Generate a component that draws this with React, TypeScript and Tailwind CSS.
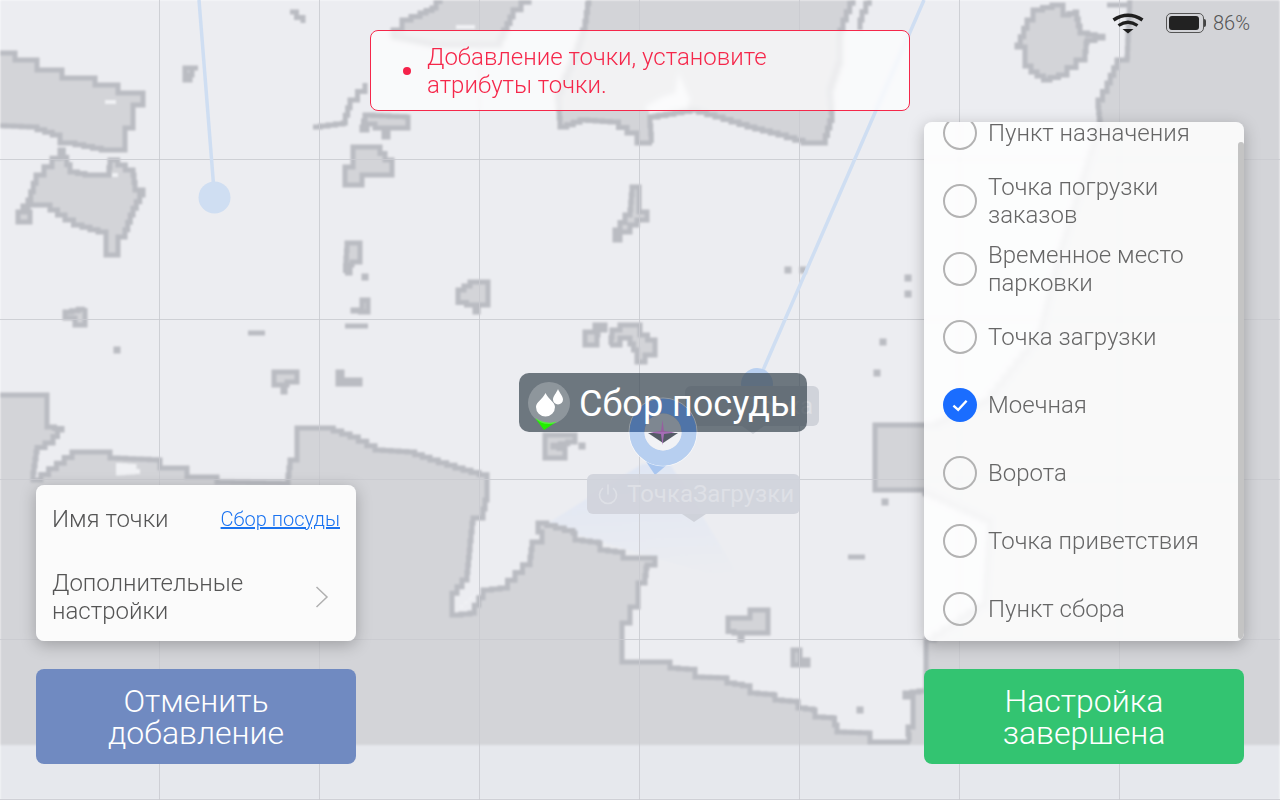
const LAND_FILL = "#d3d4d8";
const LAND_LINE = "#babcc2";
const WATER = "#ecedf1";

type Pt = [number, number];

// raster map look: every slanted edge turns into small stair steps
function stairs(points: Pt[], closed = true, step = 8): string {
  const out: Pt[] = [points[0]];
  const count = closed ? points.length : points.length - 1;
  for (let i = 0; i < count; i++) {
    const [x0, y0] = points[i];
    const [x1, y1] = points[(i + 1) % points.length];
    const n = Math.max(1, Math.round(Math.max(Math.abs(x1 - x0), Math.abs(y1 - y0)) / step));
    for (let k = 1; k <= n; k++) {
      const nx = x0 + ((x1 - x0) * k) / n;
      const ny = y0 + ((y1 - y0) * k) / n;
      out.push([nx, y0 + ((y1 - y0) * (k - 1)) / n]);
      out.push([nx, ny]);
    }
  }
  return "M" + out.map((p) => `${p[0].toFixed(1)} ${p[1].toFixed(1)}`).join("L") + (closed ? "Z" : "");
}

const mainland: Pt[] = [
  [-10, 395], [43, 395], [47, 400], [47, 427], [62, 430], [53, 443], [37, 452], [33, 480], [72, 452], [107, 452], [110, 458],
  [157, 460], [160, 468], [182, 468], [187, 477], [213, 477], [217, 482], [287, 483], [290, 460], [297, 460], [297, 428],
  [325, 428], [350, 437], [375, 450], [407, 452], [430, 460], [455, 468], [487, 477], [487, 500], [483, 518], [473, 523],
  [470, 550], [467, 580], [452, 600], [452, 615], [470, 613], [483, 590], [500, 588], [530, 557], [532, 542], [542, 532],
  [538, 523], [573, 533], [575, 540], [598, 543], [600, 550], [623, 553], [623, 558], [647, 558], [655, 565], [647, 568],
  [645, 583], [638, 585], [638, 607], [630, 608], [630, 623], [622, 623], [622, 662], [668, 662], [670, 668], [695, 670],
  [695, 677], [725, 678], [727, 683], [750, 687], [750, 693], [773, 695], [775, 700], [797, 702], [798, 708], [813, 710],
  [815, 717], [832, 718], [837, 732], [867, 733], [870, 742], [910, 742], [908, 727], [913, 723], [913, 697], [905, 693],
  [926, 690], [926, 640], [985, 600], [990, 520], [925, 490], [875, 490], [875, 425], [930, 425], [985, 400], [1040, 330],
  [1060, 250], [1100, 120], [1098, 100], [1107, 83], [1117, 60], [1127, 57], [1130, -10], [1290, -10], [1290, 760], [-10, 760],
];

const islands: Pt[][] = [
  [[-10, 53], [15, 53], [15, 60], [37, 60], [37, 70], [62, 70], [62, 78], [95, 78], [95, 85], [118, 85], [118, 93], [143, 93], [143, 105], [133, 105], [133, 128], [125, 128], [125, 150], [110, 150], [75, 143], [62, 143], [60, 135], [37, 127], [-10, 125]],
  [[60, 150], [70, 172], [85, 175], [108, 175], [110, 160], [133, 175], [135, 190], [143, 195], [133, 215], [125, 237], [118, 240], [118, 255], [106, 255], [106, 232], [82, 225], [65, 215], [50, 205], [35, 205], [28, 212], [30, 222], [18, 222], [18, 212], [28, 200], [36, 175]],
  [[393, 30], [402, 20], [420, 13], [432, 8], [440, -5], [537, -5], [513, 17], [507, 30], [500, 45], [440, 45], [395, 36]],
  [[590, -5], [585, 30], [575, 60], [558, 100], [560, 127], [580, 120], [610, 122], [627, 133], [637, 143], [652, 143], [650, 117], [690, 110], [715, 117], [747, 127], [778, 135], [803, 143], [823, 143], [832, 113], [830, 87], [840, 57], [840, 30], [843, 20], [853, -5]],
  [[185, 68], [198, 68], [192, 75], [190, 80], [185, 80]],
  [[353, 147], [375, 147], [385, 160], [392, 165], [392, 175], [368, 175], [362, 185], [345, 185], [345, 167], [353, 160]],
  [[362, 127], [365, 115], [405, 117], [408, 128], [390, 128], [388, 137], [384, 128], [375, 124], [367, 130]],
  [[347, 243], [360, 243], [360, 262], [352, 265], [350, 273], [345, 273]],
  [[353, 310], [362, 300], [368, 300], [368, 312]],
  [[274, 372], [297, 372], [297, 382], [287, 385], [285, 392], [283, 385], [274, 380]],
  [[338, 372], [342, 372], [342, 380], [360, 380], [360, 384], [338, 384]],
  [[458, 290], [470, 282], [488, 282], [488, 305], [478, 312], [475, 305], [458, 300]],
  [[585, 345], [585, 332], [595, 325], [605, 325], [605, 330], [598, 335], [597, 345]],
  [[610, 345], [612, 330], [620, 325], [635, 325], [640, 335], [655, 345], [655, 355], [645, 362], [637, 362], [637, 350], [630, 338], [620, 345]],
  [[632, 187], [639, 187], [639, 212], [647, 220], [637, 225], [630, 232], [620, 232], [620, 240], [615, 240], [615, 230], [625, 215], [630, 210]],
  [[545, 435], [575, 435], [575, 442], [553, 447], [565, 450], [565, 458], [545, 458]],
  [[728, 618], [745, 618], [750, 610], [762, 610], [768, 618], [768, 633], [745, 633], [742, 640], [740, 633], [728, 630]],
  [[793, 650], [797, 650], [800, 660], [808, 662], [808, 665], [793, 665]],
  [[65, 312], [85, 308], [85, 325], [78, 325], [75, 318], [65, 318]],
  [[1027, 20], [1033, 10], [1052, 5], [1063, 15], [1075, 12], [1080, 33], [1103, 38], [1087, 43], [1085, 60], [1067, 75], [1050, 80], [1037, 72], [1025, 60], [1025, 47], [1017, 45]],
];

const lakes: Pt[][] = [
  [[116, 463], [133, 464], [140, 474], [116, 476]],
  [[652, 114], [646, 105], [660, 97], [675, 92], [678, 74], [690, 102], [688, 108]],
  [[456, 25], [475, 25], [475, 29], [456, 29]],
  [[460, 605], [474, 593], [476, 596], [463, 608]],
  [[105, 100], [116, 100], [116, 104], [105, 104]],
  [[112, 173], [118, 173], [118, 177], [112, 177]],
];

const dashes: Pt[][] = [
  [[290, 12], [303, 23]],
  [[313, 127], [343, 123], [350, 100], [365, 83]],
  [[345, 326], [368, 326]],
  [[248, 333], [265, 333]],
  [[848, 557], [865, 557]],
  [[873, -5], [862, 20], [860, 30]],
  [[1107, 5], [1130, 5]],
];

const dots: Pt[] = [
  [365, 277], [117, 350], [788, 270], [803, 270], [908, 278], [908, 294], [883, 342], [877, 373], [582, 446], [860, 710], [885, 502],
];

function MapBackground() {
  const gridX = [159, 319, 479, 639, 799, 959, 1119];
  const gridY = [159, 319, 479, 639, 799];

  return (
    <>
      <svg viewBox="0 0 1280 800" className="absolute inset-0 h-[800px] w-[1280px] blur-[1px]">
        <defs>
          <linearGradient id="fan" x1="0" y1="0" x2="0.1" y2="1">
            <stop offset="0" stopColor="#dfe6f4" />
            <stop offset="1" stopColor="#ecedf1" />
          </linearGradient>
        </defs>
        <rect x="-10" y="-10" width="1300" height="820" fill={WATER} />
        <polygon points="642,464 670,464 745,585 545,525" fill="url(#fan)" />
        <path d={stairs(mainland)} fill={LAND_FILL} stroke={LAND_LINE} strokeWidth="5" />
        {islands.map((pts, i) => (
          <path key={i} d={stairs(pts)} fill={LAND_FILL} stroke={LAND_LINE} strokeWidth="5" />
        ))}
        {lakes.map((pts, i) => (
          <path key={i} d={stairs(pts, true, 5)} fill="#f0f1f4" />
        ))}
        {dashes.map((pts, i) => (
          <path key={i} d={stairs(pts, false)} fill="none" stroke={LAND_LINE} strokeWidth="5" />
        ))}
        {dots.map(([x, y], i) => (
          <rect key={i} x={x - 3.5} y={y - 3.5} width="7" height="7" fill={LAND_LINE} />
        ))}
        <rect x="-10" y="745" width="1300" height="65" fill="#e6e8ed" />
      </svg>
      <svg viewBox="0 0 1280 800" className="absolute inset-0 h-[800px] w-[1280px]">
        {gridX.map((x) => (
          <rect key={x} x={x} y="0" width="1" height="800" fill="#c9cad0" opacity="0.85" />
        ))}
        {gridY.map((y) => (
          <rect key={y} x="0" y={y} width="1280" height="1" fill="#c9cad0" opacity="0.85" />
        ))}
        <path d="M199 0L214.5 197" stroke="#cfdef2" strokeWidth="3.5" />
        <circle cx="214.5" cy="197.5" r="16" fill="#cfdef2" />
        <path d="M924 0L757 384" stroke="#cfdef2" strokeWidth="3.5" />
        <circle cx="757" cy="384" r="16" fill="#b9d0f0" />
      </svg>
    </>
  );
}

function PinMarker() {
  return (
    <svg viewBox="620 390 90 90" className="absolute left-[620px] top-[390px] h-[90px] w-[90px]">
      <path d="M645 460L668 464L655 475Z" fill="#a9c6ef" />
      <circle cx="663" cy="432" r="34" fill="none" stroke="#ffffff" strokeOpacity="0.6" strokeWidth="1" />
      <circle cx="663" cy="432" r="26" fill="none" stroke="#b7cff0" strokeWidth="15" />
      <circle cx="663" cy="432" r="18.5" fill="#f1f2f5" />
      <path d="M648 433L663 443L678 433Z" fill="#555b66" />
      <path d="M662.5 420L664 431L675 432.5L664 434L662.5 445L661 434L650 432.5L661 431Z" fill="#a66db5" />
    </svg>
  );
}

function Drops() {
  return (
    <svg viewBox="519 373 288 59" className="absolute inset-0 h-[59px] w-[288px]">
      <circle cx="663" cy="432" r="26" fill="none" stroke="#4f74a8" strokeWidth="15" />
      <circle cx="663" cy="432" r="34" fill="none" stroke="#ffffff" strokeOpacity="0.25" strokeWidth="1" />
      <circle cx="663" cy="432" r="18.5" fill="#7e8791" />
      <path d="M662.5 420L664 431L675 432.5L650 432.5L661 431Z" fill="#96609f" />
      <path d="M535 418Q546 425 557 421.5L544 430Z" fill="#22ee00" />
      <circle cx="549" cy="403" r="21" fill="#ffffff" fillOpacity="0.23" />
      <path d="M545.5 393C548 399 555 402 555 407A9.5 9.5 0 0 1 536 407C536 402 543 399 545.5 393Z" fill="#ffffff" />
      <path d="M558 389C559.5 393 563 396 563 399.5A5 5 0 0 1 553 399.5C553 396 556.5 393 558 389Z" fill="#ffffff" />
    </svg>
  );
}

function MapLabels() {
  return (
    <>
      <div className="absolute left-[685px] top-[386px] flex h-10 w-[134px] items-center justify-end rounded-md bg-[#d0d3da] px-1.5 text-2xl text-[#dfe1e6]">
        Точка
        <span className="absolute left-[57px] top-full h-0 w-0 border-x-[11px] border-t-[8px] border-x-transparent border-t-[#d0d3da]" />
      </div>
      <PinMarker />
      <div className="absolute left-[587px] top-[474px] flex h-10 w-[213px] items-center gap-[7px] rounded-md bg-[#cfd2da]/90 pl-[9px] text-2xl text-[#dee0e6]">
        <svg viewBox="0 0 24 24" className="h-6 w-6" fill="none" stroke="#dee0e6" strokeWidth="1.6" strokeLinecap="round">
          <path d="M12 3v9" />
          <path d="M17.5 6.5a8.5 8.5 0 1 1-11 0" />
        </svg>
        <span>ТочкаЗагрузки</span>
        <span className="absolute left-[95px] top-full h-0 w-0 border-x-[12px] border-t-[8px] border-x-transparent border-t-[#cfd2da]" />
      </div>
      <div className="absolute left-[519px] top-[373px] h-[59px] w-[288px] overflow-hidden rounded-[10px] bg-[#37444f]/70 text-[36px] leading-[59px] text-white">
        <Drops />
        <span className="absolute left-[60px] top-[2px] whitespace-nowrap">Сбор посуды</span>
      </div>
    </>
  );
}

function StatusBar() {
  return (
    <div className="absolute right-[30px] top-3 flex items-center">
      <svg viewBox="0 0 32 22" className="mr-[22px] h-[22px] w-[32px]" fill="none" stroke="#1f1f1f">
        <path d="M1.5 8Q16 -1.5 30.5 8" strokeWidth="3.6" />
        <path d="M6.5 13.5Q16 7 25.5 13.5" strokeWidth="3.2" />
        <path d="M10.5 17H21.5L16 21.5Z" fill="#1f1f1f" stroke="none" />
      </svg>
      <div className="flex items-center">
        <div className="h-5 w-[38px] rounded-[5px] border border-[#555] p-[2px]">
          <div className="h-full w-[30px] rounded-[3px] bg-[#222]" />
        </div>
        <div className="h-2 w-[2px] rounded-r-sm bg-[#444]" />
      </div>
      <span className="ml-[7px] text-xl font-light leading-5 text-[#555]">86%</span>
    </div>
  );
}

const points = [
  { label: ["Пункт назначения"] },
  { label: ["Точка погрузки", "заказов"] },
  { label: ["Временное место", "парковки"] },
  { label: ["Точка загрузки"] },
  { label: ["Моечная"], checked: true },
  { label: ["Ворота"] },
  { label: ["Точка приветствия"] },
  { label: ["Пункт сбора"] },
];

function PointList() {
  return (
    <div className="relative h-[519px] overflow-hidden rounded-lg bg-white/85 shadow-[0_4px_16px_rgba(0,0,0,0.25)] backdrop-blur-[2px]">
      <div className="-mt-[23px] flex flex-col">
        {points.map((point) => (
          <div key={point.label[0]} className="flex h-[68px] shrink-0 items-center pl-[19px]">
            {point.checked ? (
              <span className="flex h-[34px] w-[34px] items-center justify-center rounded-full bg-[#1a6dff]">
                <svg viewBox="0 0 20 20" className="h-6 w-6" fill="none" stroke="#ffffff" strokeWidth="2">
                  <path d="M4.5 10.5L8.5 14L15.5 6.5" />
                </svg>
              </span>
            ) : (
              <span className="h-[34px] w-[34px] rounded-full border-2 border-[#b3b3b3]" />
            )}
            <div className="ml-[11px] text-2xl font-light leading-7 text-[#666]">
              {point.label.map((line) => (
                <div key={line}>{line}</div>
              ))}
            </div>
          </div>
        ))}
      </div>
      <div className="absolute bottom-0.5 right-0 top-5 w-1.5 rounded-sm bg-[#c4c4c4]" />
    </div>
  );
}

export default function App() {
  return (
    <div className="relative h-[800px] w-[1280px] overflow-hidden font-['Roboto',sans-serif]">
      <MapBackground />
      <MapLabels />
      <StatusBar />

      <div className="absolute inset-0 flex justify-between px-9">
        <div className="flex w-80 flex-col justify-end pb-9">
          <div className="h-[156px] rounded-lg bg-white/90 px-4 shadow-[0_4px_16px_rgba(0,0,0,0.25)] backdrop-blur-[2px]">
            <div className="flex h-[68px] items-center justify-between">
              <span className="text-2xl font-light text-[#555]">Имя точки</span>
              <a className="text-xl font-light text-[#1a73f0] underline">Сбор посуды</a>
            </div>
            <div className="flex h-[88px] items-start justify-between pt-[16px]">
              <span className="text-2xl font-light leading-7 text-[#555]">
                Дополнительные
                <br />
                настройки
              </span>
              <svg viewBox="0 0 14 22" className="mr-[11px] mt-[17px] h-[22px] w-[14px]" fill="none" stroke="#b0b0b0" strokeWidth="1.5">
                <path d="M1.5 1L12 11L1.5 21" />
              </svg>
            </div>
          </div>
          <button
            type="button"
            className="mt-7 h-[95px] rounded-lg bg-[#708ac1] text-[32px] font-light leading-8 text-white"
          >
            Отменить
            <br />
            добавление
          </button>
        </div>

        <div className="mt-[30px] flex h-[81px] w-[540px] items-center rounded-lg border border-[#f5274a] bg-white/70 pl-[32px] pr-4 backdrop-blur-[2px]">
          <span className="h-2 w-2 shrink-0 rounded-full bg-[#f5224a]" />
          <p className="ml-4 text-2xl font-light leading-7 text-[#f5274a]">
            Добавление точки, установите
            <br />
            атрибуты точки.
          </p>
        </div>

        <div className="flex w-80 flex-col justify-end pb-9">
          <PointList />
          <button
            type="button"
            className="mt-7 h-[95px] rounded-lg bg-[#33c471] text-[32px] font-light leading-8 text-white"
          >
            Настройка
            <br />
            завершена
          </button>
        </div>
      </div>
    </div>
  );
}
